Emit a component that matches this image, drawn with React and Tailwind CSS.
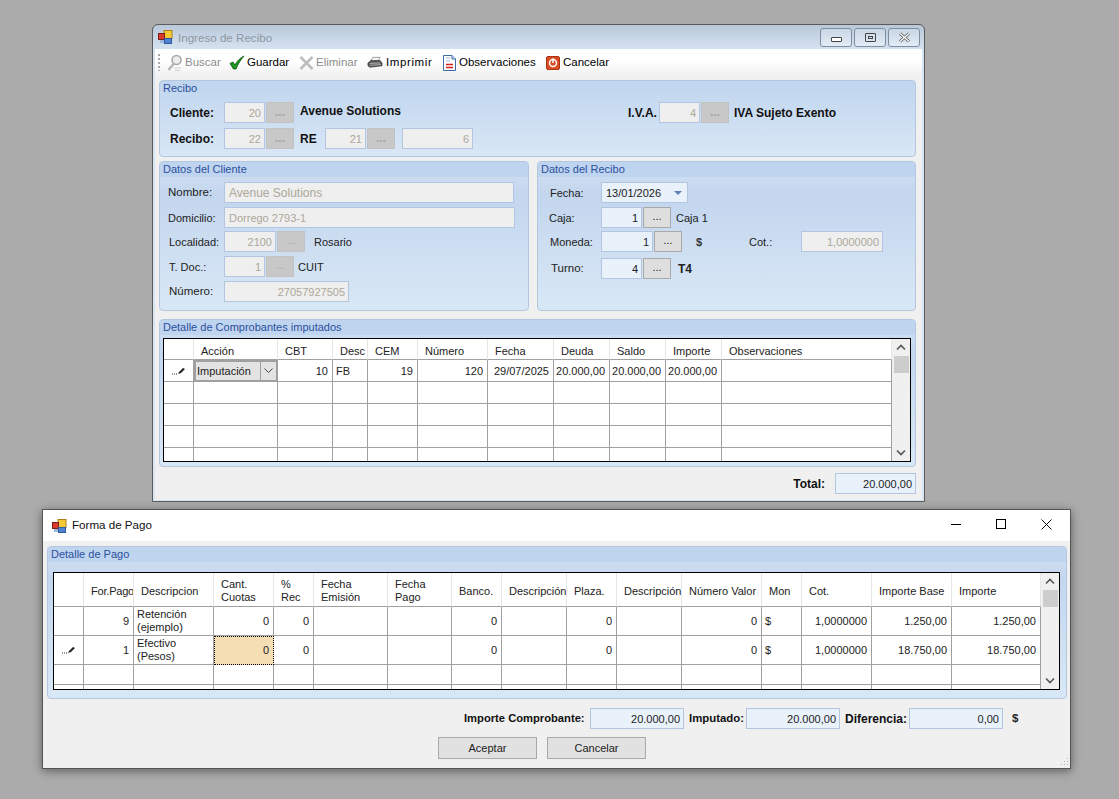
import React from 'react';

const gridOne = 'grid grid-cols-[30px_84px_55px_35px_50px_70px_66px_56px_56px_56px_170px] grid-rows-[21px_22px_22px_22px_22px_22px] w-[728px]';
const gridTwo = 'grid grid-cols-[30px_50px_80px_60px_40px_74px_64px_50px_65px_50px_65px_80px_40px_70px_80px_89px] grid-rows-[34px_29px_29px_20px_20px] w-[987px]';
const row = 'h-[21px] flex items-center [&>span]:pt-[1px]';

const AppIcon = () => (
  <svg width="15" height="14" viewBox="0 0 15 14" className="shrink-0">
    <rect x="6" y="0.5" width="8" height="8" fill="#f6c935" stroke="#a9801c" />
    <rect x="0.5" y="3.5" width="6" height="6" fill="#d83a2c" stroke="#7d1e16" />
    <rect x="6.5" y="8.5" width="7" height="5" fill="#4f83d1" stroke="#2f5a9f" />
    <rect x="2" y="10" width="4" height="3" fill="#9db8dc" />
  </svg>
);

const SearchIcon = () => (
  <svg width="16" height="18" viewBox="0 0 16 18">
    <circle cx="9.5" cy="6" r="4.5" fill="#ececec" stroke="#a9a9a9" strokeWidth="1.6" />
    <path d="M6.5 10 L1.5 16" stroke="#b5b5b5" strokeWidth="2.4" />
    <path d="M7 14h7M8 16.5h5" stroke="#cfcfcf" />
  </svg>
);

const CheckIcon = () => (
  <svg width="16" height="15" viewBox="0 0 16 15">
    <path d="M1 8.5 L4 7 L6 10 C8 6 11 3 15 1 C11.500 5 9 9 7 14 L4.500 14 Z" fill="#1f9a1f" stroke="#0c4f0c" strokeWidth="0.8" />
  </svg>
);

const CrossIcon = () => (
  <svg width="15" height="14" viewBox="0 0 15 14">
    <path d="M1.500 1 L13.500 13 M13.500 1 L1.500 13" stroke="#bdbdbd" strokeWidth="2.6" />
  </svg>
);

const PrinterIcon = () => (
  <svg width="17" height="13" viewBox="0 0 17 13">
    <path d="M6 1 L14 1 L12 5 L4 5 Z" fill="#f4f4f4" stroke="#777" strokeWidth="0.7" />
    <path d="M1 7 L4 4.500 L14 4.500 L16 7 L16 10 L3 11.500 L1 10 Z" fill="#5c5c5c" stroke="#2e2e2e" strokeWidth="0.7" />
    <path d="M3 7.500 L14 7 M3 9.500 L15 8.700" stroke="#c9c9c9" strokeWidth="0.8" />
  </svg>
);

const DocIcon = () => (
  <svg width="13" height="16" viewBox="0 0 13 16">
    <path d="M0.500 0.500 H9 L12.500 4 V15.500 H0.500 Z" fill="#fff" stroke="#3f6aa8" />
    <path d="M9 0.500 V4 H12.500" fill="#cfe0f5" stroke="#3f6aa8" />
    <path d="M3 9.500 H10 M3 12.500 H10" stroke="#d81e1e" strokeWidth="1.400" />
    <path d="M3 3 H7 M3 6 H7" stroke="#9db4d4" />
  </svg>
);

const StopIcon = () => (
  <svg width="14" height="14" viewBox="0 0 14 14">
    <rect x="0.500" y="0.500" width="13" height="13" rx="1.500" fill="#dd4b22" stroke="#a8330f" />
    <circle cx="7" cy="7" r="3.500" fill="none" stroke="#fff" strokeWidth="1.500" />
    <path d="M7 2.500 V7" stroke="#fff" strokeWidth="1.500" />
  </svg>
);

const Pencil = () => (
  <svg width="14" height="8" viewBox="0 0 14 8">
    <path d="M0 7h1M2 7h1M4 7h1" stroke="#333" />
    <path d="M6 7 L7 5 L11 1 L13 2 L9 6 Z" fill="#222" />
  </svg>
);

const ToolItem = ({ icon, label, off, className, labelClass }) => (
  <div className={`flex items-center gap-[2px] h-full ${className}`}>
    <span className="flex items-center justify-center w-[16px]">{icon}</span>
    <span className={`${off ? 'text-[#8d8d8d]' : 'text-black'} ${labelClass || ''}`}>{label}</span>
  </div>
);

const TextBox = ({ value, off, left, size = 'text-[11px]', className }) => (
  <div
    className={`h-[21px] shrink-0 border border-[#b2c6e2] pl-[4px] pr-[3px] pt-[1px] flex items-center ${size} ${left ? 'justify-start' : 'justify-end'} ${
      off ? 'bg-[#efefef] text-[#aca899]' : 'bg-[#e9f1fb] text-[#222]'
    } ${className}`}
  >
    {value}
  </div>
);

const Browse = ({ off }) => (
  <div
    className={`ml-px h-[21px] w-[28px] shrink-0 border flex items-center justify-center pb-[2px] ${
      off ? 'bg-[#c8c8c8] border-[#c2c2c2] text-[#a5a5a5]' : 'bg-[#dedede] border-[#a9a9a9] text-[#222]'
    }`}
  >
    ...
  </div>
);

const Group = ({ title, className, bodyClass, children }) => (
  <div className={`rounded-[4px] border border-[#b3c7e0] overflow-hidden flex flex-col bg-[linear-gradient(180deg,#d5e2f3_0%,#c3d6ee_22%,#d9e8f6_100%)] text-[11px] ${className}`}>
    <div className="h-[15px] shrink-0 bg-[#bfd5ef] pl-[3px] leading-[15px] text-[#2b4f9e]">{title}</div>
    <div className={`flex-1 ${bodyClass}`}>{children}</div>
  </div>
);

const Head = ({ children, right, two, className }) => (
  <div
    className={`flex items-center border-r border-r-[#e6e6e6] border-b border-b-[#a0a0a0] overflow-hidden whitespace-nowrap text-[#222] ${
      right ? 'justify-end pr-[2px]' : 'pl-[7px]'
    } ${two ? 'leading-[13px] pt-[2px]' : 'pt-[4px]'} ${className || ''}`}
  >
    {children && <span>{children}</span>}
  </div>
);

const Cell = ({ children, right, className }) => (
  <div
    className={`flex items-center border-r border-b border-[#a0a0a0] overflow-hidden whitespace-nowrap leading-[13px] ${
      right ? 'justify-end pr-[4px]' : 'pl-[3px]'
    } ${className || ''}`}
  >
    {children && <span>{children}</span>}
  </div>
);

const Scrollbar = () => (
  <div className="w-[18px] shrink-0 bg-[#f0f0f0] flex flex-col items-center">
    <svg width="18" height="17" viewBox="0 0 18 17">
      <path d="M5 10.500 L9 6.500 L13 10.500" fill="none" stroke="#555" strokeWidth="1.600" />
    </svg>
    <div className="w-[15px] h-[17px] bg-[#cdcdcd]" />
    <div className="flex-1" />
    <svg width="18" height="17" viewBox="0 0 18 17">
      <path d="M5 6.500 L9 10.500 L13 6.500" fill="none" stroke="#555" strokeWidth="1.600" />
    </svg>
  </div>
);

const emptyRowOne = [0, 1, 2, 3, 4, 5, 6, 7, 8, 9, 10];
const emptyRowTwo = [0, 1, 2, 3, 4, 5, 6, 7, 8, 9, 10, 11, 12, 13, 14, 15];

const ReciboWindow = () => (
  <div className="absolute left-[152px] top-[24px] w-[773px] h-[478px] rounded-t-[6px] border border-[#5b5b5b] bg-[linear-gradient(180deg,#b9c9da_0px,#d7e4f2_26px,#d9e6f3_100%)] flex flex-col px-[2px] pb-[1px]">
    {/* Title */}
    <div className="h-[24px] shrink-0 flex items-center pl-[3px] relative">
      <AppIcon />
      <span className="ml-[5px] pt-[2px] text-[#8e98a3] text-[11.6px]">Ingreso de Recibo</span>
      <div className="absolute right-[2px] top-[3px] flex gap-[2px]">
        <div className="w-[32px] h-[19px] rounded-[3px] border border-[#7d8ea3] bg-[linear-gradient(180deg,#c9d6e5,#e3ecf6)] flex items-center justify-center">
          <div className="w-[11px] h-[5px] mt-[3px] border border-[#444] rounded-[1px] bg-white" />
        </div>
        <div className="w-[32px] h-[19px] rounded-[3px] border border-[#7d8ea3] bg-[linear-gradient(180deg,#c9d6e5,#e3ecf6)] flex items-center justify-center">
          <div className="w-[11px] h-[9px] border border-[#444] rounded-[1px] flex items-center justify-center">
            <div className="w-[5px] h-[3px] border border-[#444]" />
          </div>
        </div>
        <div className="w-[32px] h-[19px] rounded-[3px] border border-[#7d8ea3] bg-[linear-gradient(180deg,#c9d6e5,#e3ecf6)] flex items-center justify-center">
          <svg width="13" height="11" viewBox="0 0 13 11">
            <path d="M2 1.500 L11 9.500 M11 1.500 L2 9.500" stroke="#555" strokeWidth="3" />
            <path d="M2 1.500 L11 9.500 M11 1.500 L2 9.500" stroke="#fff" strokeWidth="1.400" />
          </svg>
        </div>
      </div>
    </div>

    {/* Client area */}
    <div className="flex-1 bg-[#f0f0f0] flex flex-col min-h-0">
      <div className="h-[27px] shrink-0 bg-[linear-gradient(180deg,#ffffff_0%,#ffffff_45%,#f0f0f0_100%)] flex items-center pl-[3px]">
        <div className="w-[2px] h-[17px] mr-[6px] bg-[repeating-linear-gradient(180deg,#a8a8a8_0px,#a8a8a8_2px,transparent_2px,transparent_4px)]" />
        <div className="flex h-full items-center ml-[1px]">
          <ToolItem icon={<SearchIcon />} label="Buscar" off className="w-[62px]" />
          <ToolItem icon={<CheckIcon />} label="Guardar" className="w-[69px]" />
          <ToolItem icon={<CrossIcon />} label="Eliminar" off className="w-[69px]" />
          <ToolItem icon={<PrinterIcon />} label="Imprimir" labelClass="ml-px tracking-[0.6px]" className="w-[74px]" />
          <ToolItem icon={<DocIcon />} label="Observaciones" className="w-[104px]" />
          <ToolItem icon={<StopIcon />} label="Cancelar" className="w-[70px]" />
        </div>
      </div>

      <div className="pl-[4px] pt-[4px] flex flex-col">
        <div className="w-[757px] h-[77px] rounded-[4px] border border-[#b3c7e0] bg-[linear-gradient(180deg,#c0d5ee,#d9e7f6)] flex flex-col">
          <div className="h-[15px] pl-[3px] leading-[15px] text-[11px] text-[#2b4f9e]">Recibo</div>
          <div className={`mt-[6px] ${row} font-bold text-[12px] text-[#111]`}>
            <span className="w-[64px] pl-[10px]">Cliente:</span>
            <TextBox off value="20" className="w-[41px] font-normal" />
            <Browse off />
            <span className="ml-[6px] w-[328px] !pt-0 mb-[4px]">Avenue Solutions</span>
            <span className="w-[31px]">I.V.A.</span>
            <TextBox off value="4" className="w-[41px] font-normal" />
            <Browse off />
            <span className="ml-[5px]">IVA Sujeto Exento</span>
          </div>
          <div className={`mt-[5px] ${row} font-bold text-[12px] text-[#111]`}>
            <span className="w-[64px] pl-[10px]">Recibo:</span>
            <TextBox off value="22" className="w-[41px] font-normal" />
            <Browse off />
            <span className="ml-[6px] w-[25px]">RE</span>
            <TextBox off value="21" className="w-[41px] font-normal" />
            <Browse off />
            <TextBox off value="6" className="ml-[7px] w-[71px] font-normal" />
          </div>
        </div>

        <div className="mt-[4px] flex gap-[8px]">
          <Group title="Datos del Cliente" className="w-[370px] h-[150px]" bodyClass="pt-[5px]">
            <div className={row}>
              <span className="w-[64px] pl-[8px] text-[11.5px]">Nombre:</span>
              <TextBox off left size="text-[12px]" value="Avenue Solutions" className="w-[290px]" />
            </div>
            <div className={`mt-[4px] ${row}`}>
              <span className="w-[64px] pl-[8px]">Domicilio:</span>
              <TextBox off left value="Dorrego 2793-1" className="w-[291px]" />
            </div>
            <div className={`mt-[3px] ${row}`}>
              <span className="w-[64px] pl-[9px]">Localidad:</span>
              <TextBox off value="2100" className="w-[52px]" />
              <Browse off />
              <span className="ml-[9px]">Rosario</span>
            </div>
            <div className={`mt-[4px] ${row}`}>
              <span className="w-[64px] pl-[9px]">T. Doc.:</span>
              <TextBox off value="1" className="w-[41px]" />
              <Browse off />
              <span className="ml-[4px]">CUIT</span>
            </div>
            <div className={`mt-[4px] ${row}`}>
              <span className="w-[64px] pl-[9px] text-[11.5px]">Número:</span>
              <TextBox off value="27057927505" className="w-[125px]" />
            </div>
          </Group>

          <Group title="Datos del Recibo" className="w-[379px] h-[150px]" bodyClass="pt-[5px]">
            <div className={row}>
              <span className="w-[63px] pl-[12px]">Fecha:</span>
              <div className="w-[87px] h-[21px] border border-[#b2c6e2] bg-[#e9f1fb] flex items-center justify-between pl-[4px] pr-[5px] pt-[1px] text-[#222]">
                13/01/2026
                <span className="w-0 h-0 border-x-[4px] border-x-transparent border-t-[4px] border-t-[#5d7fb3]" />
              </div>
            </div>
            <div className={`mt-[4px] ${row}`}>
              <span className="w-[63px] pl-[11px]">Caja:</span>
              <TextBox value="1" className="w-[41px]" />
              <Browse />
              <span className="ml-[5px]">Caja 1</span>
            </div>
            <div className={`mt-[3px] ${row}`}>
              <span className="w-[63px] pl-[12px]">Moneda:</span>
              <TextBox value="1" className="w-[52px]" />
              <Browse />
              <span className="ml-[14px] w-[53px] font-bold text-[#333]">$</span>
              <span className="w-[52px]">Cot.:</span>
              <TextBox off value="1,0000000" className="w-[82px]" />
            </div>
            <div className={`mt-[6px] ${row}`}>
              <span className="w-[63px] pl-[13px] text-[11.5px]">Turno:</span>
              <TextBox value="4" className="w-[41px]" />
              <Browse />
              <span className="ml-[7px] font-bold text-[12px]">T4</span>
            </div>
          </Group>
        </div>

        <Group title="Detalle de Comprobantes imputados" className="mt-[8px] w-[757px] h-[148px]" bodyClass="pl-[3px] pt-[3px]">
          <div className="w-[748px] h-[124px] border border-black bg-white flex overflow-hidden">
            <div className={`${gridOne} h-[122px] overflow-hidden text-[#222]`}>
              <Head />
              <Head>Acción</Head>
              <Head>CBT</Head>
              <Head right>Desc</Head>
              <Head>CEM</Head>
              <Head>Número</Head>
              <Head>Fecha</Head>
              <Head>Deuda</Head>
              <Head>Saldo</Head>
              <Head>Importe</Head>
              <Head>Observaciones</Head>

              <Cell className="justify-center !pl-0"><Pencil /></Cell>
              <div className="border-2 border-[#a0a0a0] bg-[#e3e3e3] flex items-center justify-between">
                <span className="pl-[1px] pt-[1px]">Imputación</span>
                <span className="w-[16px] h-full border-l border-[#a0a0a0] flex items-center justify-center">
                  <svg width="9" height="6" viewBox="0 0 9 6"><path d="M0.500 0.500 L4.500 4.500 L8.500 0.500" fill="none" stroke="#444" /></svg>
                </span>
              </div>
              <Cell right className="pt-[2px]">10</Cell>
              <Cell className="pt-[2px]">FB</Cell>
              <Cell right className="pt-[2px]">19</Cell>
              <Cell right className="pt-[2px]">120</Cell>
              <Cell right className="pt-[2px]">29/07/2025</Cell>
              <Cell right className="pt-[2px]">20.000,00</Cell>
              <Cell right className="pt-[2px]">20.000,00</Cell>
              <Cell right className="pt-[2px]">20.000,00</Cell>
              <Cell />

              {emptyRowOne.map((i) => <Cell key={`a${i}`} />)}
              {emptyRowOne.map((i) => <Cell key={`b${i}`} />)}
              {emptyRowOne.map((i) => <Cell key={`c${i}`} />)}
              {emptyRowOne.map((i) => <Cell key={`d${i}`} />)}
            </div>
            <Scrollbar />
          </div>
        </Group>

        <div className="mt-[6px] w-[757px] flex items-center justify-end">
          <span className="font-bold text-[12px] mr-[10px] pt-[1px] text-[#111]">Total:</span>
          <TextBox value="20.000,00" className="w-[81px]" />
        </div>
      </div>
    </div>
  </div>
);

const PagoWindow = () => (
  <div className="absolute left-[42px] top-[509px] w-[1029px] h-[260px] border border-[#555] bg-[#f0f0f0] shadow-[0_2px_9px_rgba(0,0,0,0.45)] flex flex-col">
    <div className="h-[31px] shrink-0 bg-white flex items-center pl-[9px] relative">
      <AppIcon />
      <span className="ml-[5px] pb-[2px] text-[#111] text-[11.6px]">Forma de Pago</span>
      <div className="absolute right-[18px] top-[9px] flex items-start gap-[35px]">
        <div className="w-[10px] h-px bg-black mt-[5px]" />
        <div className="w-[10px] h-[10px] border border-black" />
        <svg width="11" height="11" viewBox="0 0 11 11"><path d="M0.500 0.500 L10.500 10.500 M10.500 0.500 L0.500 10.500" stroke="#111" /></svg>
      </div>
    </div>

    <div className="pl-[4px] pt-[5px]">
      <Group title="Detalle de Pago" className="w-[1020px] h-[153px]" bodyClass="pl-[5px] pt-[10px]">
        <div className="w-[1007px] h-[118px] border border-black bg-white flex overflow-hidden">
          <div className={`${gridTwo} h-[116px] overflow-hidden text-[#222]`}>
            <Head />
            <Head className="tracking-[-0.2px]">For.Pago</Head>
            <Head>Descripcion</Head>
            <Head two>Cant.<br />Cuotas</Head>
            <Head two>%<br />Rec</Head>
            <Head two>Fecha<br />Emisión</Head>
            <Head two>Fecha<br />Pago</Head>
            <Head>Banco.</Head>
            <Head>Descripción</Head>
            <Head>Plaza.</Head>
            <Head>Descripción</Head>
            <Head>Número Valor</Head>
            <Head>Mon</Head>
            <Head>Cot.</Head>
            <Head>Importe Base</Head>
            <Head>Importe</Head>

            <Cell />
            <Cell right>9</Cell>
            <Cell>Retención<br />(ejemplo)</Cell>
            <Cell right>0</Cell>
            <Cell right>0</Cell>
            <Cell />
            <Cell />
            <Cell right>0</Cell>
            <Cell />
            <Cell right>0</Cell>
            <Cell />
            <Cell right>0</Cell>
            <Cell>$</Cell>
            <Cell right>1,0000000</Cell>
            <Cell right>1.250,00</Cell>
            <Cell right>1.250,00</Cell>

            <Cell className="justify-center !pl-0"><Pencil /></Cell>
            <Cell right>1</Cell>
            <Cell>Efectivo<br />(Pesos)</Cell>
            <div className="flex items-center justify-end pr-[4px] bg-[#f5deb3] border border-dotted border-black">0</div>
            <Cell right>0</Cell>
            <Cell />
            <Cell />
            <Cell right>0</Cell>
            <Cell />
            <Cell right>0</Cell>
            <Cell />
            <Cell right>0</Cell>
            <Cell>$</Cell>
            <Cell right>1,0000000</Cell>
            <Cell right>18.750,00</Cell>
            <Cell right>18.750,00</Cell>

            {emptyRowTwo.map((i) => <Cell key={`e${i}`} />)}
            {emptyRowTwo.map((i) => <Cell key={`f${i}`} />)}
          </div>
          <Scrollbar />
        </div>
      </Group>
    </div>

    <div className="mt-[9px] flex items-center pl-[421px] font-bold text-[#111]">
      <span className="w-[126px] text-[11.2px]">Importe Comprobante:</span>
      <TextBox value="20.000,00" className="w-[94px] font-normal" />
      <span className="ml-[5px] w-[57px] text-[11.4px]">Imputado:</span>
      <TextBox value="20.000,00" className="w-[94px] font-normal" />
      <span className="ml-[5px] w-[64px] text-[12px]">Diferencia:</span>
      <TextBox value="0,00" className="w-[94px] font-normal" />
      <span className="ml-[9px] text-[#222]">$</span>
    </div>

    <div className="mt-[8px] flex pl-[395px] gap-[10px] text-[11px]">
      <div className="w-[99px] h-[22px] border border-[#a9a9a9] bg-[#e1e1e1] flex items-center justify-center text-[#222]">Aceptar</div>
      <div className="w-[99px] h-[22px] border border-[#a9a9a9] bg-[#e1e1e1] flex items-center justify-center text-[#222]">Cancelar</div>
    </div>

    <svg width="10" height="10" viewBox="0 0 10 10" className="absolute right-[1px] bottom-[1px]">
      <path d="M8 1h1v1H8zM5 4h1v1H5zM8 4h1v1H8zM2 7h1v1H2zM5 7h1v1H5zM8 7h1v1H8z" fill="#b5b5b5" />
    </svg>
  </div>
);

export default function App() {
  return (
    <div className="relative w-[1119px] h-[799px] overflow-hidden bg-[#ababab] font-['Liberation_Sans',sans-serif] text-[11.5px] text-[#222]">
      <ReciboWindow />
      <PagoWindow />
    </div>
  );
}
